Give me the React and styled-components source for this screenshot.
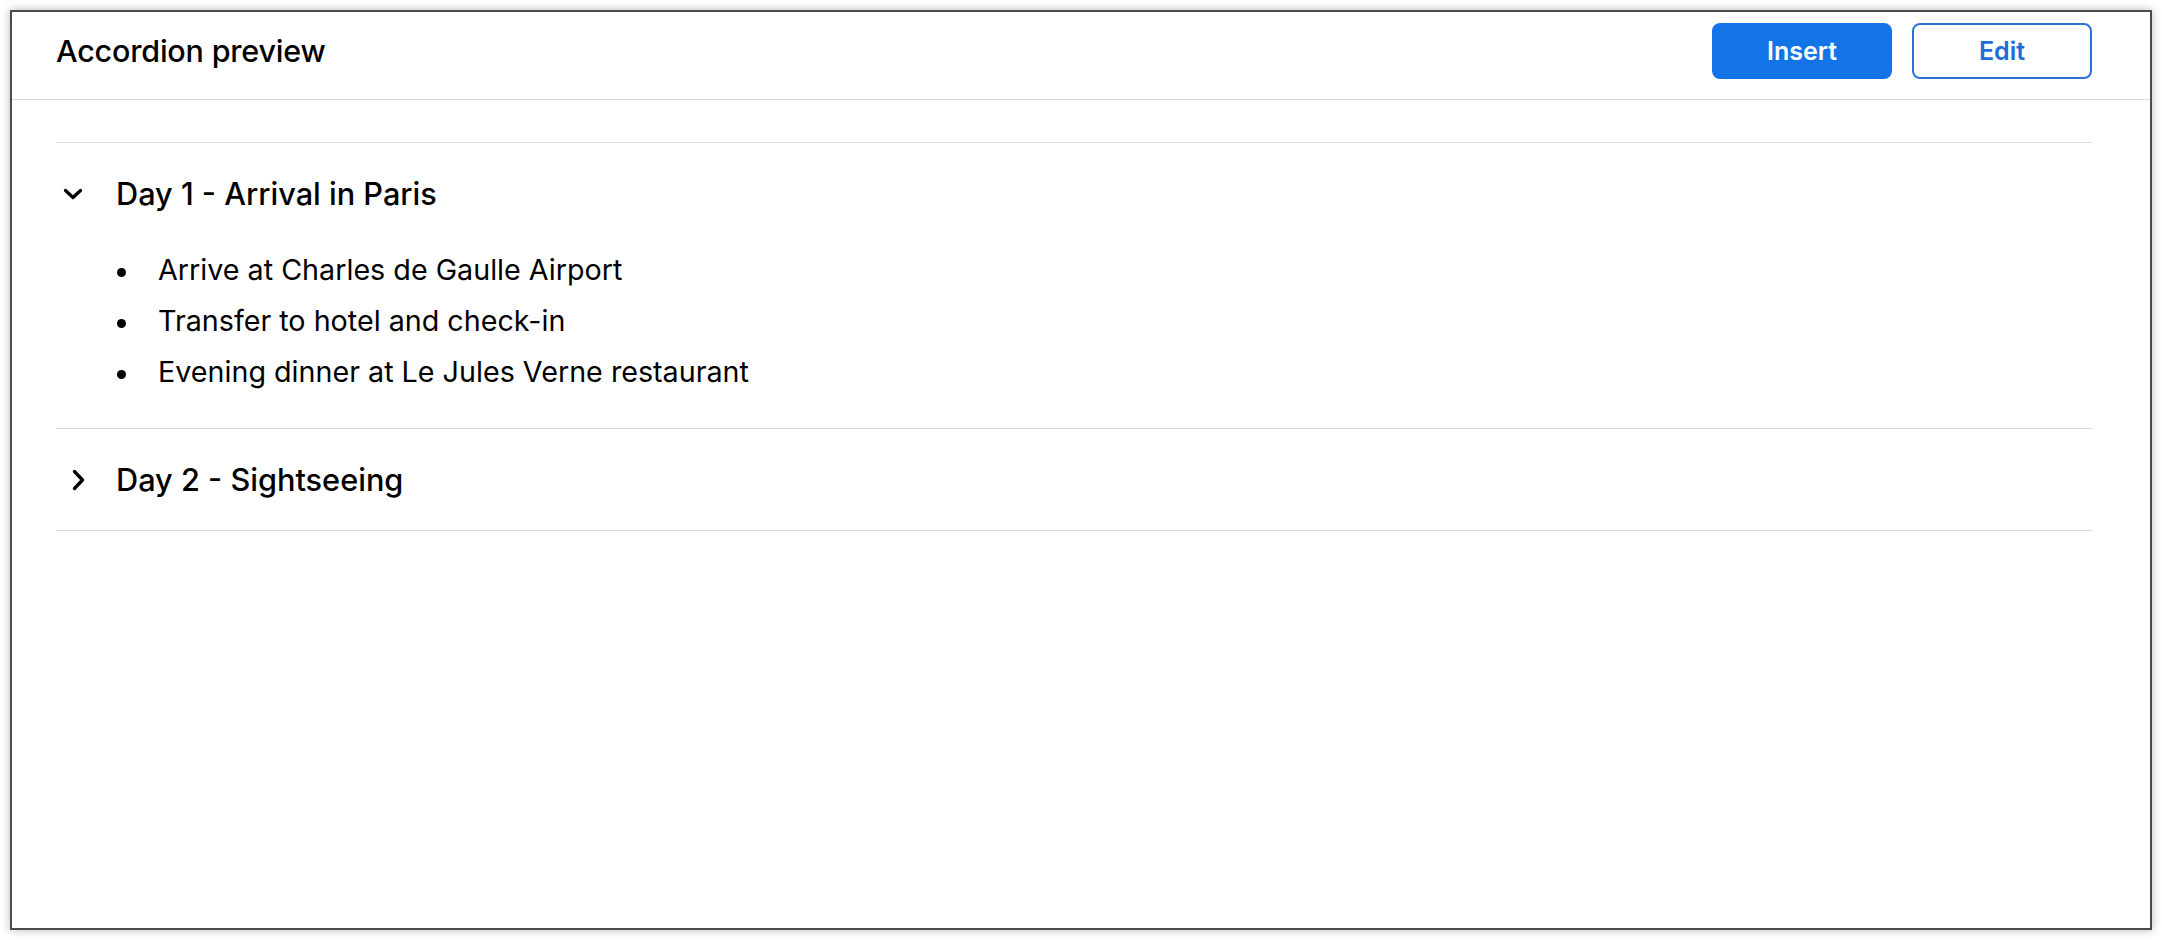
import React, { useState } from 'react';
import styled, { createGlobalStyle } from 'styled-components';

const GlobalStyle = createGlobalStyle`
    html, body {
        margin: 0;
        padding: 0;
        background: #ffffff;
    }
    body {
        font-family: Inter, "Noto Sans", "Liberation Sans", sans-serif;
        color: #000000;
    }
`;

const days = [
    {
        title: 'Day 1 - Arrival in Paris',
        items: [
            'Arrive at Charles de Gaulle Airport',
            'Transfer to hotel and check-in',
            'Evening dinner at Le Jules Verne restaurant',
        ],
    },
    {
        title: 'Day 2 - Sightseeing',
        items: [
            'Visit the Eiffel Tower',
            'Lunch at a local café',
            'Afternoon at the Louvre Museum',
        ],
    },
];

const Chevron = ({ open }) => (
    <Icon width="28" height="28" viewBox="0 0 28 28">
        {open ? (
            <path d="M3.5 10.5 L11 17.5 L18.5 10.5" />
        ) : (
            <path d="M12.5 5.5 L20.5 14 L12.5 22.5" />
        )}
    </Icon>
);

const App = () => {
    const [openIndex, setOpenIndex] = useState(0); // 열린 항목

    return (
        <>
            <GlobalStyle />
            <Frame>
                <Header>
                    <Title>Accordion preview</Title>
                    <Actions>
                        <Button primary>Insert</Button>
                        <Button>Edit</Button>
                    </Actions>
                </Header>
                <Content>
                    <Accordion>
                        {days.map((day, index) => (
                            <Item key={day.title}>
                                <Trigger onClick={() => setOpenIndex(openIndex === index ? -1 : index)}>
                                    <Chevron open={openIndex === index} />
                                    {day.title}
                                </Trigger>
                                {openIndex === index && (
                                    <Panel>
                                        {day.items.map((text) => (
                                            <Bullet key={text}>{text}</Bullet>
                                        ))}
                                    </Panel>
                                )}
                            </Item>
                        ))}
                    </Accordion>
                </Content>
            </Frame>
        </>
    );
};

const Frame = styled.div`
    box-sizing: border-box;
    margin: 10px;
    height: 920px;
    border: 2px solid #4b4b4b;
    box-shadow: 0 0 9px rgba(0, 0, 0, 0.28);
    background: #ffffff;
    display: flex;
    flex-direction: column;
`;
const Header = styled.div`
    display: flex;
    align-items: center;
    justify-content: space-between;
    height: 88px;
    padding: 11px 58px 21px 44px;
    box-sizing: border-box;
    border-bottom: 1px solid #d8dce5;
`;
const Title = styled.h1`
    margin: 0;
    font-size: 30.5px;
    font-weight: 500;
    letter-spacing: -0.2px;
`;
const Actions = styled.div`
    display: flex;
    gap: 20px;
`;
const Button = styled.button`
    box-sizing: border-box;
    width: 180px;
    height: 56px;
    border-radius: 8px;
    font-family: inherit;
    font-size: 25px;
    font-weight: 600;
    cursor: pointer;
    border: 2px solid ${(p) => (p.primary ? '#1374e8' : '#2a72d6')};
    background: ${(p) => (p.primary ? '#1374e8' : '#ffffff')};
    color: ${(p) => (p.primary ? '#ffffff' : '#1c6dd6')};
`;
const Content = styled.div`
    padding: 42px 58px 0 44px;
`;
const Accordion = styled.div`
    display: flex;
    flex-direction: column;
`;
const Item = styled.div`
    border-top: 1px solid #d8dce5;
    &:last-child {
        border-bottom: 1px solid #d8dce5;
    }
`;
const Trigger = styled.button`
    display: flex;
    align-items: center;
    gap: 26px;
    width: 100%;
    height: 101px;
    padding: 0 0 0 6px;
    border: none;
    background: none;
    font-family: inherit;
    font-size: 30.7px;
    font-weight: 500;
    color: #000000;
    text-align: left;
    cursor: pointer;
`;
const Icon = styled.svg`
    flex: none;
    fill: none;
    stroke: #000000;
    stroke-width: 3.3;
    stroke-linecap: round;
    stroke-linejoin: round;
`;
const Panel = styled.ul`
    list-style: none;
    margin: 0;
    padding: 0 0 31px 61px;
`;
const Bullet = styled.li`
    display: flex;
    align-items: center;
    gap: 32px;
    font-size: 28.7px;
    line-height: 51px;
    &::before {
        content: '';
        flex: none;
        width: 9px;
        height: 9px;
        margin-top: 6px;
        border-radius: 50%;
        background: #000000;
    }
`;

export default App;
